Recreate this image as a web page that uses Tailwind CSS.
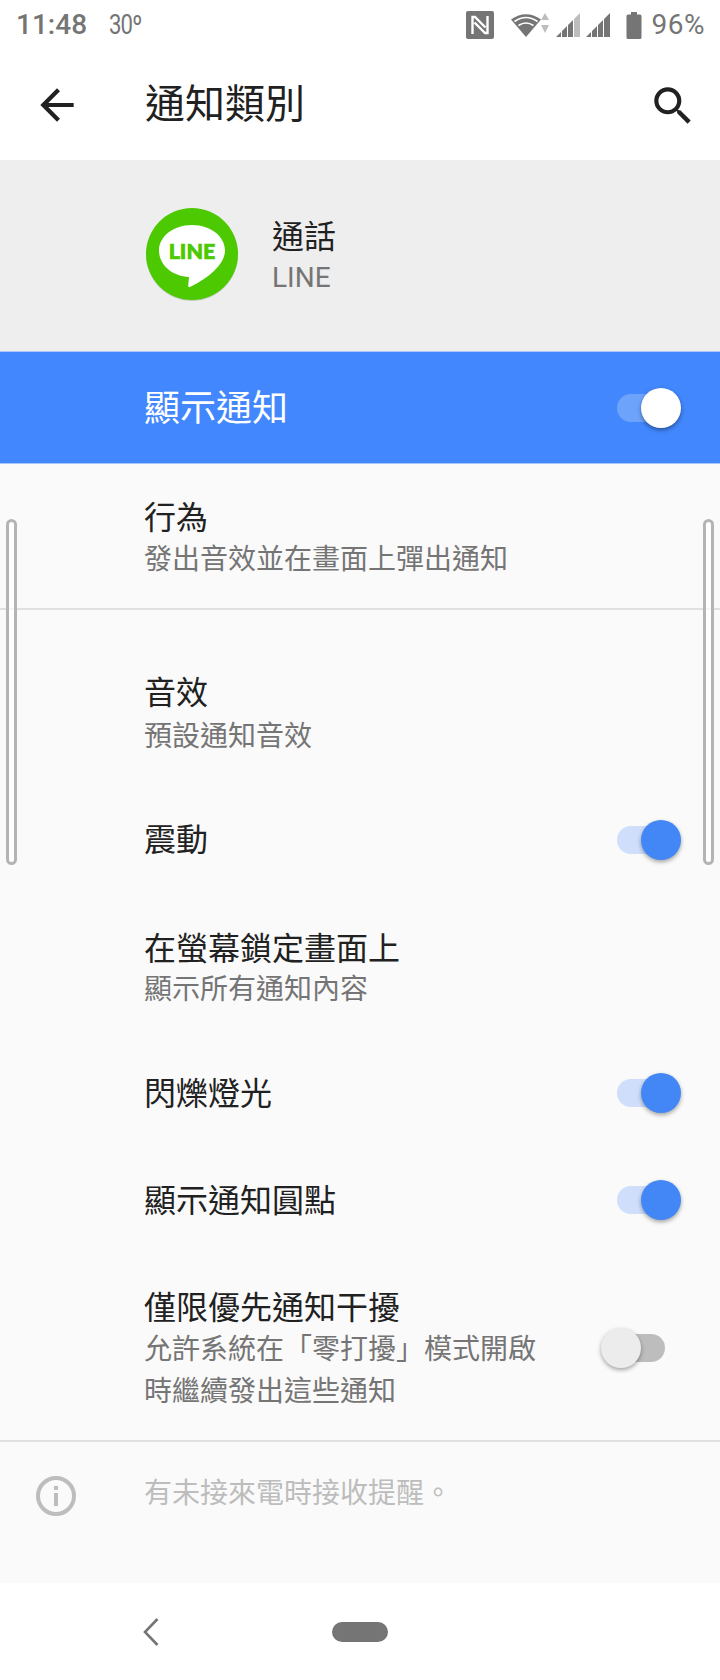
<!DOCTYPE html>
<html lang="zh-Hant">
<head>
<meta charset="utf-8">
<script src="https://cdn.jsdelivr.net/npm/@tailwindcss/browser@4"></script>
</head>
<body class="m-0">
<div class="relative flex flex-col w-[720px] h-[1680px] overflow-hidden bg-white font-['Roboto','Noto_Sans_CJK_TC',sans-serif]">

  <!-- status bar -->
  <div class="flex items-center h-[50px] text-[#757575] shrink-0">
    <span class="ml-[16px] w-[93px] text-[28px] font-medium leading-none">11:48</span>
    <span class="inline-block origin-left scale-x-[0.82] text-[27px] leading-none tracking-[-1px]">30º</span>
    <div class="ml-auto flex items-center">
      <svg class="w-[28px] h-[28px]" viewBox="0 0 28 28"><rect x="0" y="0" width="28" height="28" rx="2" fill="#757575"/><path d="M6.500 23V6h2.500l10.500 10.500M21.500 5v17h-2.500L8.500 11.500" fill="none" stroke="#fff" stroke-width="2.400"/></svg>
      <svg class="ml-[17px] w-[40px] h-[26px]" viewBox="0 0 40 26"><path d="M0 7.500Q15-3 30 7.500L15 25Z" fill="#757575"/><path d="M3.500 9.500Q15 1.500 26.500 9.500M7.500 13.500Q15 8.500 22.500 13.500" fill="none" stroke="#fff" stroke-width="1.600"/><path d="M34 1l4 7h-8zM34 21l4-8h-8z" fill="#bdbdbd"/></svg>
      <svg class="ml-[5px] w-[25px] h-[26px]" viewBox="0 0 25 26"><path d="M0 25L5 20V25ZM6 25V19L11 14V25ZM12 25V13L17 8V25Z" fill="#757575"/><path d="M18 25V7L24 1V25Z" fill="#bdbdbd"/></svg>
      <svg class="ml-[5px] w-[25px] h-[26px]" viewBox="0 0 25 26"><path d="M0 25L5 20V25ZM6 25V19L11 14V25ZM12 25V13L17 8V25ZM18 25V7L24 1V25Z" fill="#757575"/></svg>
      <svg class="ml-[15px] w-[16px] h-[27px]" viewBox="0 0 16 27"><path d="M5 0h6v2.500h3a1.500 1.500 0 0 1 1.500 1.500V25.500A1.500 1.500 0 0 1 14 27H2A1.500 1.500 0 0 1 .5 25.500V4A1.500 1.500 0 0 1 2 2.500h3Z" fill="#757575"/></svg>
      <span class="ml-[10px] mr-[15px] text-[28px] leading-none tracking-[0.5px]">96%</span>
    </div>
  </div>

  <!-- app bar -->
  <div class="flex items-center h-[110px] shrink-0 bg-white">
    <svg class="ml-[32px] w-[50px] h-[50px]" viewBox="0 0 24 24"><path d="M20 11H7.830l5.590-5.590L12 4l-8 8 8 8 1.410-1.410L7.830 13H20v-2z" fill="#212121"/></svg>
    <span class="ml-[63px] text-[40px] leading-none text-[#212121]">通知類別</span>
    <svg class="ml-auto mr-[22px] mt-[2px] w-[50px] h-[50px]" viewBox="0 0 24 24"><path d="M15.500 14h-.790l-.280-.270A6.471 6.471 0 0 0 16 9.500 6.500 6.500 0 1 0 9.500 16c1.610 0 3.090-.590 4.230-1.570l.270.280v.790l5 4.990L20.490 19l-4.990-5zm-6 0C7.010 14 5 11.990 5 9.500S7.010 5 9.500 5 14 7.010 14 9.500 11.990 14 9.500 14z" fill="#212121"/></svg>
  </div>

  <!-- app header -->
  <div class="flex items-center h-[191px] shrink-0 bg-[#eeeeee] pl-[146px]">
    <svg class="w-[92px] h-[94px] -mt-[2px]" viewBox="0 0 92 94">
      <ellipse cx="46" cy="47" rx="46" ry="46" fill="#000" opacity="0.15"/>
      <circle cx="46" cy="46" r="46" fill="#4cc900"/>
      <path d="M46 17C64 17 79 28 79 42.500C79 55 66 68 44 79C42.500 79.500 42 78.500 42.300 76.500L43 69C26 68 13 57 13 42.500C13 28 28 17 46 17Z" fill="#fff"/>
      <text x="46" y="51" text-anchor="middle" font-family="Lato, Roboto, sans-serif" font-weight="900" font-size="21.500" fill="#4cc900" stroke="#4cc900" stroke-width="0.700">LINE</text>
    </svg>
    <div class="ml-[34px] mt-[3px] flex flex-col">
      <span class="text-[32px] leading-[42px] text-[#212121]">通話</span>
      <span class="text-[28px] leading-[40px] text-[#757575]">LINE</span>
    </div>
  </div>

  <!-- master switch -->
  <div class="flex items-center justify-between h-[113px] shrink-0 bg-[#4287fd] border-y border-[#a8c6fb] pl-[144px] pr-[39px]">
    <span class="mt-[3px] text-[36px] leading-none text-white">顯示通知</span>
    <div class="relative w-[64px] h-[40px]">
      <div class="absolute left-0 top-[6px] w-[48px] h-[28px] rounded-full bg-[#6ea3fc]"></div>
      <div class="absolute right-0 top-0 w-[40px] h-[40px] rounded-full bg-white shadow-[0_2px_4px_rgba(0,0,0,0.4)]"></div>
    </div>
  </div>

  <!-- list -->
  <div class="flex flex-col flex-1 bg-[#fafafa]">
    <div class="flex flex-col justify-center h-[146px] shrink-0 border-b-2 border-[#e0e0e0] pl-[144px] pt-[5px]">
      <span class="mb-[2px] text-[32px] leading-[40px] text-[#212121]">行為</span>
      <span class="text-[28px] leading-[40px] text-[#757575]">發出音效並在畫面上彈出通知</span>
    </div>

    <div class="flex flex-col justify-center h-[179px] shrink-0 pt-[30px] pl-[144px]">
      <span class="mb-[2px] text-[32px] leading-[42px] text-[#212121]">音效</span>
      <span class="text-[28px] leading-[42px] text-[#757575]">預設通知音效</span>
    </div>

    <div class="flex items-center justify-between h-[102px] shrink-0 pl-[144px] pr-[39px]">
      <span class="text-[32px] leading-[42px] text-[#212121]">震動</span>
      <div class="relative w-[64px] h-[40px]">
        <div class="absolute left-0 top-[6px] w-[48px] h-[28px] rounded-full bg-[#cfdefb]"></div>
        <div class="absolute right-0 top-0 w-[40px] h-[40px] rounded-full bg-[#4287f5] shadow-[0_2px_4px_rgba(0,0,0,0.35)]"></div>
      </div>
    </div>

    <div class="flex flex-col justify-center h-[150px] shrink-0 pt-[6px] pl-[144px]">
      <span class="text-[32px] leading-[42px] text-[#212121]">在螢幕鎖定畫面上</span>
      <span class="-mt-[1px] text-[28px] leading-[42px] text-[#757575]">顯示所有通知內容</span>
    </div>

    <div class="flex items-center justify-between h-[105px] shrink-0 pl-[144px] pr-[39px]">
      <span class="text-[32px] leading-[42px] text-[#212121]">閃爍燈光</span>
      <div class="relative -mt-[2px] w-[64px] h-[40px]">
        <div class="absolute left-0 top-[6px] w-[48px] h-[28px] rounded-full bg-[#cfdefb]"></div>
        <div class="absolute right-0 top-0 w-[40px] h-[40px] rounded-full bg-[#4287f5] shadow-[0_2px_4px_rgba(0,0,0,0.35)]"></div>
      </div>
    </div>

    <div class="flex items-center justify-between h-[109px] shrink-0 pl-[144px] pr-[39px]">
      <span class="text-[32px] leading-[42px] text-[#212121]">顯示通知圓點</span>
      <div class="relative -mt-[2px] w-[64px] h-[40px]">
        <div class="absolute left-0 top-[6px] w-[48px] h-[28px] rounded-full bg-[#cfdefb]"></div>
        <div class="absolute right-0 top-0 w-[40px] h-[40px] rounded-full bg-[#4287f5] shadow-[0_2px_4px_rgba(0,0,0,0.35)]"></div>
      </div>
    </div>

    <div class="flex items-center h-[187px] shrink-0 border-b-2 border-[#e0e0e0] pl-[144px] pt-[5px]">
      <div class="flex flex-col w-[400px]">
        <span class="text-[32px] leading-[42px] text-[#212121]">僅限優先通知干擾</span>
        <span class="text-[28px] leading-[42px] text-[#757575]">允許系統在「零打擾」模式開啟時繼續發出這些通知</span>
      </div>
      <div class="relative ml-[57px] w-[64px] h-[40px] -mt-[4px]">
        <div class="absolute right-0 top-[6px] w-[48px] h-[28px] rounded-full bg-[#bdbdbd]"></div>
        <div class="absolute left-0 top-0 w-[40px] h-[40px] rounded-full bg-[#ececec] shadow-[0_2px_4px_rgba(0,0,0,0.35)]"></div>
      </div>
    </div>

    <div class="flex items-start pt-[34px] pl-[36px]">
      <svg class="w-[40px] h-[40px]" viewBox="0 0 40 40"><circle cx="20" cy="20" r="18" fill="none" stroke="#bdbdbd" stroke-width="4"/><rect x="18" y="17" width="4" height="13" fill="#bdbdbd"/><rect x="18" y="10" width="4" height="4" fill="#bdbdbd"/></svg>
      <span class="ml-[68px] -mt-[3px] text-[28px] leading-[42px] text-[#bdbdbd]">有未接來電時接收提醒。</span>
    </div>
  </div>

  <!-- nav bar -->
  <div class="relative flex items-center h-[97px] shrink-0 bg-white">
    <svg class="ml-[142px] w-[18px] h-[30px]" viewBox="0 0 18 30"><path d="M15.500 2L3 15L15.500 28" fill="none" stroke="#757575" stroke-width="2.600"/></svg>
    <div class="ml-[172px] w-[56px] h-[20px] rounded-full bg-[#757575]"></div>
  </div>

  <!-- overlay edge handles -->
  <div class="absolute left-[6px] top-[519px] w-[11px] h-[346px] rounded-full border-[3px] border-[#b4b4b4] bg-white/70"></div>
  <div class="absolute left-[703px] top-[519px] w-[11px] h-[346px] rounded-full border-[3px] border-[#b4b4b4] bg-white/70"></div>
</div>
</body>
</html>
